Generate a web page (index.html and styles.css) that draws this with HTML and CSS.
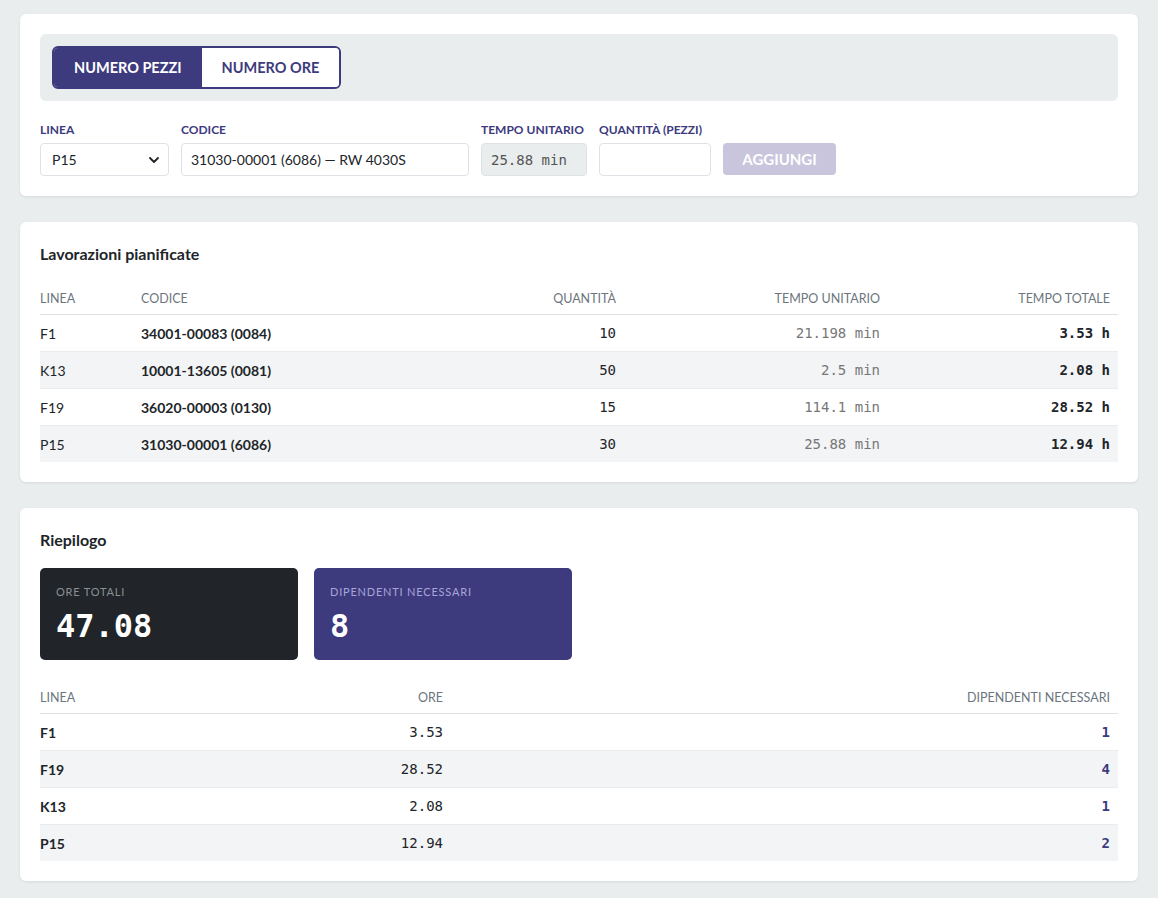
FILE: index.html
```html
<!DOCTYPE html>
<html>
<head>
  <title>Pianificazione lavorazioni</title>
  <link rel="stylesheet" href="styles.css">
</head>
<body>
  <!-- Inserimento -->
  <div class="card">
    <div class="mode-bar">
      <div class="segmented">
        <button class="seg active" type="button">Numero pezzi</button>
        <button class="seg" type="button">Numero ore</button>
      </div>
    </div>

    <form class="entry-row">
      <div class="field f-linea">
        <label for="linea">Linea</label>
        <div class="select-wrap">
          <select id="linea">
            <option>P15</option>
            <option>F1</option>
            <option>F19</option>
            <option>K13</option>
          </select>
          <svg class="chevron" width="10" height="6" viewBox="0 0 10 6"><path d="M1 1l4 4 4-4" fill="none" stroke="#212529" stroke-width="1.8" stroke-linecap="round" stroke-linejoin="round"/></svg>
        </div>
      </div>
      <div class="field f-codice">
        <label for="codice">Codice</label>
        <input type="text" id="codice" value="31030-00001 (6086) — RW 4030S">
      </div>
      <div class="field f-tempo">
        <label for="tempo">Tempo unitario</label>
        <input type="text" id="tempo" class="readonly" value="25.88 min" readonly>
      </div>
      <div class="field f-qta">
        <label for="qta">Quantità (pezzi)</label>
        <input type="text" id="qta">
      </div>
      <button class="btn-add" type="button" disabled>Aggiungi</button>
    </form>
  </div>

  <!-- Lavorazioni -->
  <div class="card">
    <h3>Lavorazioni pianificate</h3>
    <table class="data plan">
      <colgroup>
        <col style="width:101px"><col style="width:303px"><col style="width:180px"><col style="width:264px"><col style="width:230px">
      </colgroup>
      <thead>
        <tr><th>Linea</th><th>Codice</th><th class="r">Quantità</th><th class="r">Tempo unitario</th><th class="r">Tempo totale</th></tr>
      </thead>
      <tbody>
        <tr><td>F1</td><td class="code">34001-00083 (0084)</td><td class="r mono">10</td><td class="r mono muted">21.198 min</td><td class="r mono strong">3.53 h</td></tr>
        <tr><td>K13</td><td class="code">10001-13605 (0081)</td><td class="r mono">50</td><td class="r mono muted">2.5 min</td><td class="r mono strong">2.08 h</td></tr>
        <tr><td>F19</td><td class="code">36020-00003 (0130)</td><td class="r mono">15</td><td class="r mono muted">114.1 min</td><td class="r mono strong">28.52 h</td></tr>
        <tr><td>P15</td><td class="code">31030-00001 (6086)</td><td class="r mono">30</td><td class="r mono muted">25.88 min</td><td class="r mono strong">12.94 h</td></tr>
      </tbody>
    </table>
  </div>

  <!-- Riepilogo -->
  <div class="card">
    <h3>Riepilogo</h3>
    <div class="stats">
      <div class="stat dark">
        <div class="stat-label">Ore totali</div>
        <div class="stat-value">47.08</div>
      </div>
      <div class="stat purple">
        <div class="stat-label">Dipendenti necessari</div>
        <div class="stat-value">8</div>
      </div>
    </div>
    <table class="data summary">
      <colgroup>
        <col style="width:200px"><col style="width:211px"><col style="width:667px">
      </colgroup>
      <thead>
        <tr><th>Linea</th><th class="r">Ore</th><th class="r">Dipendenti necessari</th></tr>
      </thead>
      <tbody>
        <tr><td class="line">F1</td><td class="r mono">3.53</td><td class="r mono people">1</td></tr>
        <tr><td class="line">F19</td><td class="r mono">28.52</td><td class="r mono people">4</td></tr>
        <tr><td class="line">K13</td><td class="r mono">2.08</td><td class="r mono people">1</td></tr>
        <tr><td class="line">P15</td><td class="r mono">12.94</td><td class="r mono people">2</td></tr>
      </tbody>
    </table>
  </div>
</body>
</html>
```

FILE: styles.css
```css
body {
  margin: 0;
  padding: 14px 20px;
  background-color: #e9edee;
  font-family: Lato, "Open Sans", sans-serif;
  color: #212529;
}

.card {
  background-color: #fff;
  border-radius: 6px;
  box-shadow: 0 1px 3px rgba(0, 0, 0, 0.08);
  padding: 20px;
  margin-bottom: 26px;
}

.card h3 {
  margin: 0;
  font-size: 16px;
  line-height: 24px;
  font-weight: 700;
  color: #212529;
}

/* Mode switch */
.mode-bar {
  background-color: #e9edee;
  border-radius: 6px;
  padding: 12px;
}

.segmented {
  display: inline-flex;
  border: 2px solid #3d3a7e;
  border-radius: 6px;
  overflow: hidden;
  height: 43px;
  box-sizing: border-box;
}

.seg {
  border: none;
  background-color: #fff;
  color: #3d3a7e;
  font-family: Lato, sans-serif;
  font-size: 14.5px;
  font-weight: 700;
  text-transform: uppercase;
  padding: 0 20px;
  cursor: pointer;
}

.seg.active {
  background-color: #3d3a7e;
  color: #fff;
}

/* Entry row */
.entry-row {
  display: flex;
  align-items: flex-end;
  gap: 12px;
  margin-top: 22px;
}

.field label {
  display: block;
  font-size: 12px;
  line-height: 14px;
  font-weight: 700;
  color: #3d3a7e;
  text-transform: uppercase;
  margin-bottom: 6px;
}

.field input,
.field select {
  box-sizing: border-box;
  height: 33px;
  width: 100%;
  border: 1px solid #dee2e6;
  border-radius: 4px;
  padding: 0 9px;
  font-family: Lato, sans-serif;
  font-size: 14px;
  color: #212529;
  background-color: #fff;
}

.f-linea { width: 129px; }
.f-codice { width: 288px; }
.f-tempo { width: 106px; }
.f-qta { width: 112px; }

.select-wrap {
  position: relative;
}

.field select {
  appearance: none;
  -webkit-appearance: none;
  padding-left: 11px;
}

.chevron {
  position: absolute;
  right: 10px;
  top: 14px;
  pointer-events: none;
}

.field input.readonly {
  background-color: #e9edee;
  font-family: "DejaVu Sans Mono", monospace;
  font-size: 14px;
  color: #555;
}

.btn-add {
  height: 32px;
  width: 113px;
  margin-bottom: 1px;
  border: none;
  border-radius: 4px;
  background-color: #c8c5dd;
  color: #fff;
  font-family: Lato, sans-serif;
  font-size: 15px;
  font-weight: 700;
  text-transform: uppercase;
}

/* Tables */
.data {
  width: 100%;
  border-collapse: collapse;
  table-layout: fixed;
  margin-top: 17px;
}

.data th {
  height: 31px;
  padding: 0 8px 0 0;
  font-size: 12.5px;
  font-weight: 400;
  text-transform: uppercase;
  color: #6c757d;
  text-align: left;
  vertical-align: middle;
  border-bottom: 1px solid #dee2e6;
}

.data td {
  height: 36px;
  padding: 0 8px 0 0;
  font-size: 14px;
  border-bottom: 1px solid #e9ecef;
  vertical-align: middle;
}

.data tbody tr:nth-child(even) td {
  background-color: #f3f4f5;
}

.data tbody tr:last-child td {
  border-bottom: none;
}

.data .r { text-align: right; }

.data .code,
.data .line {
  font-weight: 700;
}

.mono {
  font-family: "DejaVu Sans Mono", monospace;
  font-size: 13px;
  color: #212529;
}

.mono.muted { color: #777; }
.mono.strong { font-weight: 700; }
.mono.people { font-weight: 700; color: #3d3a7e; }

/* Summary stats */
.stats {
  display: flex;
  gap: 16px;
  margin-top: 16px;
}

.stat {
  width: 258px;
  height: 92px;
  box-sizing: border-box;
  padding: 17px 16px;
  border-radius: 5px;
}

.stat.dark { background-color: #212428; }
.stat.purple { background-color: #3d3a7e; }

.stat-label {
  font-size: 11px;
  line-height: 14px;
  letter-spacing: 0.8px;
  text-transform: uppercase;
  color: #8b9096;
}

.stat.purple .stat-label { color: #a9a5d8; }

.stat-value {
  margin-top: 7px;
  font-family: "DejaVu Sans Mono", monospace;
  font-size: 32px;
  line-height: 40px;
  font-weight: 700;
  color: #fff;
}

.summary {
  margin-top: 22px;
}
```
